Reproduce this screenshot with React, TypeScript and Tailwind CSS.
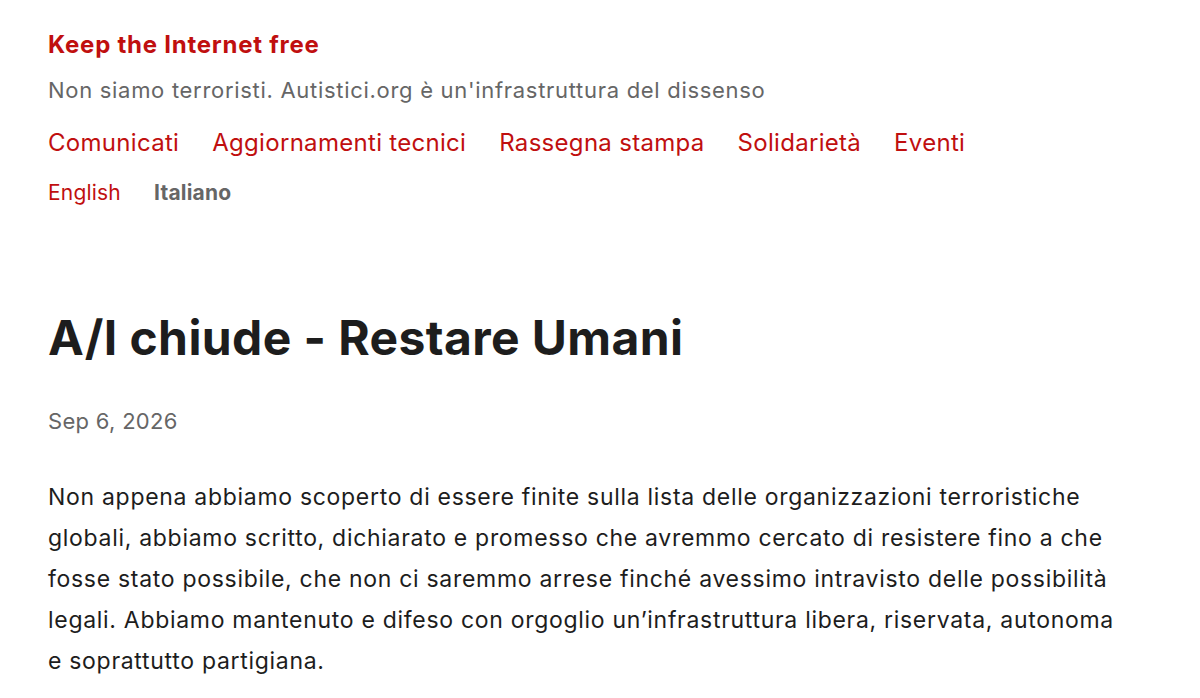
const navItems = ['Comunicati', 'Aggiornamenti tecnici', 'Rassegna stampa', 'Solidarietà', 'Eventi'];

export default function App() {
  return (
    <div className="min-h-screen bg-white text-[#1d1d1d] font-['Inter',sans-serif]">
      <div className="px-12 pt-[29px]">
        <header>
          <a href="#" className="block text-[24px] font-bold leading-[32px] tracking-[0.75px] text-[#c00f0f]">
            Keep the Internet free
          </a>
          <p className="mt-[14px] text-[22px] leading-[30px] tracking-[0.7px] text-[#666666]">
            Non siamo terroristi. Autistici.org è un'infrastruttura del dissenso
          </p>
          <nav className="mt-[21px] flex gap-[33px] text-[24px] leading-[34px] tracking-[0.3px] text-[#c00f0f]">
            {navItems.map(item => (
              <a key={item} href="#">{item}</a>
            ))}
          </nav>
          <div className="mt-[18px] flex gap-[33px] text-[21px] leading-[30px] tracking-[0.2px]">
            <a href="#" className="text-[#c00f0f]">English</a>
            <span className="font-bold text-[#666666]">Italiano</span>
          </div>
        </header>

        <main className="mt-[101px]">
          <h1 className="text-[48px] font-bold leading-[58px] tracking-[0.4px]">A/I chiude - Restare Umani</h1>
          <p className="mt-[39px] text-[22px] leading-[30px] tracking-[0.3px] text-[#666666]">Sep 6, 2026</p>
          <p className="mt-[41px] max-w-[1076px] text-[23px] leading-[41px] tracking-[0.7px]">
            Non appena abbiamo scoperto di essere finite sulla lista delle organizzazioni terroristiche globali, abbiamo scritto, dichiarato e promesso che avremmo cercato di resistere fino a che fosse stato possibile, che non ci saremmo arrese finché avessimo intravisto delle possibilità legali. Abbiamo mantenuto e difeso con orgoglio un’infrastruttura libera, riservata, autonoma e soprattutto partigiana.
          </p>
        </main>
      </div>
    </div>
  );
}
